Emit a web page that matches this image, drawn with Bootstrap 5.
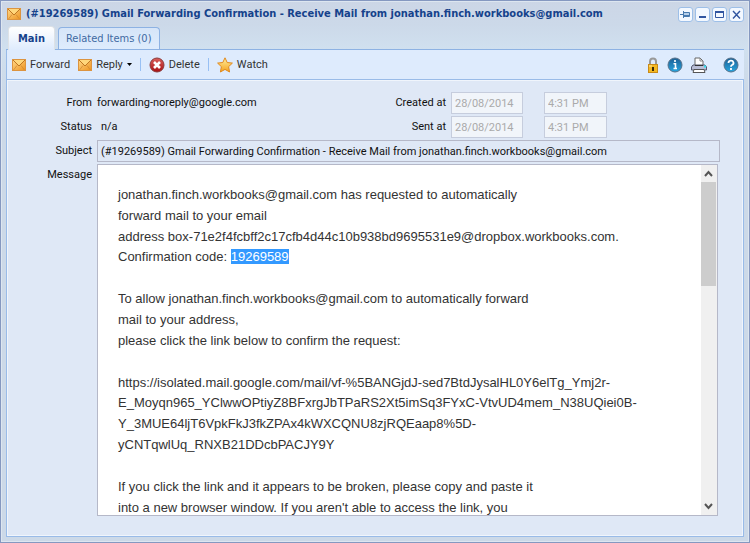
<!DOCTYPE html>
<html lang="en">
<head>
<meta charset="utf-8">
<meta name="viewport" content="width=device-width, initial-scale=1">
<title>Gmail Forwarding Confirmation</title>
<link href="https://cdn.jsdelivr.net/npm/bootstrap@5.3.0/dist/css/bootstrap.min.css" rel="stylesheet">
<style>
  body { font-family: Roboto, "Liberation Sans", sans-serif; font-size: 11px; line-height: 14px; color: #111; }
  .mail-window { border: 1px solid #8598c0; background: linear-gradient(#ccd6e6 0, #ccd9e9 24px, #d0e0ef 48px, #ccd9e8 90px); padding: 1px 5px 5px; box-shadow: inset 0 0 0 1px #dde6f0; }
  .title-row { height: 24px; padding-left: 1px; gap: 5px; }
  .title-row h1 { font-family: "DejaVu Sans Condensed", "DejaVu Sans", sans-serif; font-size: 11px; line-height: 14px; font-weight: 700; color: #15428b; white-space: nowrap; }
  .win-btns { gap: 2px; }
  .win-btn { width: 15px; height: 15px; border: 1px solid #9dbfe8; border-radius: 3px; background: #f3f8ff; }
  .mail-tabs { height: 24px; padding-left: 2px; border-bottom: 1px solid #8db2e3; --bs-nav-tabs-border-width: 0; gap: 3px; font-family: "DejaVu Sans Condensed", "DejaVu Sans", sans-serif; }
  .mail-tabs .nav-link { height: 22px; padding: 4px 7px; border: 1px solid #8db2e3; border-bottom: 0; border-radius: 4px 4px 0 0; color: #416aa3; background: linear-gradient(#d6e5f8, #deecfd); margin: 0; }
  .mail-tabs .nav-link.active { height: 24px; padding: 5px 9px; margin-bottom: -1px; color: #15428b; font-weight: 700; background: linear-gradient(#fff, #deebfd); }
  .tool-row { height: 30px; background: #deebfd; border: solid #99bbe8; border-width: 0 0 1px 1px; padding: 0 5px; }
  .tool-btn { border: 0; background: none; padding: 0; color: #333; font-family: Roboto, "Liberation Sans", sans-serif; font-size: 11px; line-height: 16px; }
  .tool-sep { width: 1px; height: 13px; background: #98c0f4; }
  .form-body { background: #dfe8f6; border: 1px solid #99bbe8; border-top: 0; box-shadow: inset 0 0 0 1px #f0f5fc; padding: 12px 23px 20px 6px; min-height: 0; }
  .field-label { width: 80px; padding-right: 1px; text-align: right; flex: none; }
  .field-rows { display: grid; gap: 10px; padding-top: 4px; }
  .box-input { height: 22px; border: 1px solid #b5b8c8; border-radius: 0; padding: 0 3px; font-size: 11px; line-height: 14px; min-width: 0; }
  .box-input:disabled { color: #aaa; background: #f1f5fa; border-color: #c6cddd; }
  .date-input { width: 72px; margin: 0 21px 0 1px; }
  .time-input { width: 63px; }
  .dates { display: grid; gap: 2px; margin-right: 113px; }
  .subject-row { padding: 2px 0; }
  .subject-input, .subject-input:focus { background: #dfe8f6; color: #111; outline: 0; }
  .message-box { border: 1px solid #b5b8c8; background: #fff; margin-right: 2px; min-height: 0; }
  .message-text { font-family: "Liberation Sans", Arial, sans-serif; font-size: 13px; line-height: 1.6; color: #333; padding: 20px; white-space: nowrap; overflow: hidden; }
  .message-text p { margin-bottom: 21px; }
  .picked { background: #39f; color: #fff; }
  .scroll-track { width: 16px; background: #f0f0f0; flex: none; }
  .scroll-track button { height: 17px; border: 0; padding: 0; background: none; }
  .scroll-thumb { height: 33%; width: 15px; background: #cdcdcd; }
  svg { display: block; flex: none; }
</style>
</head>
<body>
<svg width="0" height="0" class="position-absolute" aria-hidden="true">
  <defs>
    <linearGradient id="gold" x1="0" y1="0" x2="0" y2="1"><stop offset="0" stop-color="#fff0a0"/><stop offset="1" stop-color="#f5a21c"/></linearGradient>
    <linearGradient id="amber" x1="0" y1="0" x2="1" y2="1"><stop offset="0" stop-color="#ffd98a"/><stop offset="1" stop-color="#ee9420"/></linearGradient>
    <linearGradient id="blue" x1="0" y1="0" x2="0" y2="1"><stop offset="0" stop-color="#1d5f94"/><stop offset="1" stop-color="#27a6e0"/></linearGradient>
    <linearGradient id="red" x1="0" y1="0" x2="0" y2="1"><stop offset="0" stop-color="#d9605c"/><stop offset="1" stop-color="#a80f12"/></linearGradient>
    <symbol id="envelope" viewBox="0 0 14 12"><rect x=".5" y=".5" width="13" height="11" fill="url(#amber)" stroke="#dc9440"/><path d="M1.500 1h11L7 6.500z" fill="#ffd77c"/><path d="M1 1l6 6 6-6" fill="none" stroke="#bf7622"/><path d="M1.500 11L5 6.500M12.500 11L9 6.500" fill="none" stroke="#d08a34" stroke-width=".8"/></symbol>
  </defs>
</svg>
<main class="mail-window vh-100 d-flex flex-column">
  <header class="title-row flex-shrink-0 d-flex align-items-center">
    <svg width="14" height="12"><use href="#envelope"/></svg>
    <h1 class="mb-0 flex-grow-1">(#19269589) Gmail Forwarding Confirmation - Receive Mail from jonathan.finch.workbooks@gmail.com</h1>
    <div class="win-btns d-flex">
      <button class="win-btn p-0" aria-label="Pin"><svg width="13" height="13"><path d="M1 6.500h3M4.500 3v7" fill="none" stroke="#4879ae"/><path d="M5 4.500h5.500v4H5" fill="#b8d0ea" stroke="#4879ae"/><path d="M5 7.500h6" stroke="#4879ae"/></svg></button>
      <button class="win-btn p-0" aria-label="Minimize"><svg width="13" height="13"><path d="M3 9h7" stroke="#3155a0" stroke-width="2"/></svg></button>
      <button class="win-btn p-0" aria-label="Maximize"><svg width="13" height="13"><path d="M2.500 3v6.500h8V3" fill="none" stroke="#3155a0"/><path d="M2 4h9" stroke="#3155a0" stroke-width="2"/></svg></button>
      <button class="win-btn p-0" aria-label="Close"><svg width="13" height="13"><path d="M3 3l7 7.500M10 3l-7 7.500" stroke="#3155a0" stroke-width="1.400"/></svg></button>
    </div>
  </header>
  <nav class="mail-tabs nav nav-tabs flex-shrink-0 align-items-end flex-nowrap">
    <a class="nav-link active" href="#main" aria-current="page">Main</a>
    <a class="nav-link" href="#related">Related Items (0)</a>
  </nav>
  <div class="tool-row flex-shrink-0 d-flex align-items-center justify-content-between" role="toolbar" aria-label="Mail actions">
    <div class="d-flex align-items-center gap-2">
      <button class="tool-btn d-flex align-items-center gap-1"><svg width="14" height="12"><use href="#envelope"/></svg>Forward</button>
      <button class="tool-btn d-flex align-items-center gap-1"><svg width="14" height="12"><use href="#envelope"/></svg>Reply<svg width="5" height="3"><path d="M0 0h5L2.500 3z"/></svg></button>
      <span class="tool-sep"></span>
      <button class="tool-btn d-flex align-items-center gap-1"><svg width="16" height="16"><circle cx="8" cy="8" r="7" fill="url(#red)" stroke="#8b3a3a"/><path d="M5 5l6 6M11 5l-6 6" stroke="#fff" stroke-width="2.600"/></svg>Delete</button>
      <span class="tool-sep"></span>
      <button class="tool-btn d-flex align-items-center gap-1"><svg width="16" height="16"><path d="M8 .8l2.200 4.700 5.200.6-3.800 3.600 1 5.300L8 12.400 3.400 15l1-5.300L.6 6.100l5.200-.6z" fill="url(#gold)" stroke="#e08a20"/></svg>Watch</button>
    </div>
    <div class="d-flex align-items-center">
      <button class="tool-btn me-2" aria-label="Lock"><svg width="12" height="16"><path d="M3 8V4.500a3 3 0 0 1 6 0V8" fill="none" stroke="#999" stroke-width="2"/><rect x="1.500" y="7.500" width="9" height="8" fill="#f4b922" stroke="#c98a18"/><path d="M2 9h3" stroke="#ffe79a"/><path d="M6 10v4" stroke="#3a2a08" stroke-width="2"/></svg></button>
      <button class="tool-btn me-2" aria-label="Information"><svg width="16" height="16"><circle cx="8" cy="8" r="7" fill="url(#blue)" stroke="#56718a"/><path d="M8 3v2M6.500 6.800h2V11M6.500 11.500h3.500" fill="none" stroke="#fff" stroke-width="1.600"/></svg></button>
      <button class="tool-btn me-3" aria-label="Print"><svg width="16" height="16"><path d="M4 8V1h5l3 3v5" fill="#fff" stroke="#666"/><path d="M9 1v3h3" fill="none" stroke="#888"/><path d="M2 8h12l1.500 2v3H.5v-3z" fill="#b9bed6" stroke="#55586e"/><path d="M4 8.500h8" stroke="#333"/><path d="M3 12.500h10l1 3H2z" fill="#fff" stroke="#555"/><path d="M13 9.500h2" stroke="#2be0f0" stroke-width="2"/></svg></button>
      <button class="tool-btn" aria-label="Help"><svg width="16" height="16"><circle cx="8" cy="8" r="7" fill="url(#blue)" stroke="#56718a"/><path d="M5.500 6a2.500 2.300 0 1 1 3.500 2c-.8.400-1 .8-1 1.800M8 11v2" fill="none" stroke="#fff" stroke-width="1.800"/></svg></button>
    </div>
  </div>
  <form class="form-body flex-grow-1 d-flex flex-column">
    <div class="d-flex flex-shrink-0 justify-content-between align-items-start">
      <dl class="field-rows mb-0">
        <div class="d-flex"><dt class="field-label fw-normal">From</dt><dd class="ms-1 mb-0">forwarding-noreply@google.com</dd></div>
        <div class="d-flex"><dt class="field-label fw-normal">Status</dt><dd class="ms-2 mb-0">n/a</dd></div>
      </dl>
      <div class="dates">
        <div class="d-flex align-items-center justify-content-end"><label class="me-1" for="createdDate">Created at</label><input id="createdDate" class="box-input date-input" value="28/08/2014" disabled><input aria-label="Created time" class="box-input time-input" value="4:31 PM" disabled></div>
        <div class="d-flex align-items-center justify-content-end"><label class="me-1" for="sentDate">Sent at</label><input id="sentDate" class="box-input date-input" value="28/08/2014" disabled><input aria-label="Sent time" class="box-input time-input" value="4:31 PM" disabled></div>
      </div>
    </div>
    <div class="subject-row d-flex flex-shrink-0 align-items-center"><label class="field-label me-1" for="subject">Subject</label><input id="subject" class="box-input subject-input flex-grow-1" readonly value="(#19269589) Gmail Forwarding Confirmation - Receive Mail from jonathan.finch.workbooks@gmail.com"></div>
    <div class="d-flex flex-grow-1 overflow-hidden">
      <span class="field-label me-1 pt-1" id="messageLabel">Message</span>
      <div class="message-box flex-grow-1 d-flex" role="region" aria-labelledby="messageLabel">
        <div class="message-text flex-grow-1">
          <p>jonathan.finch.workbooks@gmail.com has requested to automatically<br>forward mail to your email<br>address box-71e2f4fcbff2c17cfb4d44c10b938bd9695531e9@dropbox.workbooks.com.<br>Confirmation code: <span class="picked">19269589</span></p>
          <p>To allow jonathan.finch.workbooks@gmail.com to automatically forward<br>mail to your address,<br>please click the link below to confirm the request:</p>
          <p>https://isolated.mail.google.com/mail/vf-%5BANGjdJ-sed7BtdJysalHL0Y6elTg_Ymj2r-<br>E_Moyqn965_YClwwOPtiyZ8BFxrgJbTPaRS2Xt5imSq3FYxC-VtvUD4mem_N38UQiei0B-<br>Y_3MUE64ljT6VpkFkJ3fkZPAx4kWXCQNU8zjRQEaap8%5D-<br>yCNTqwlUq_RNXB21DDcbPACJY9Y</p>
          <p>If you click the link and it appears to be broken, please copy and paste it<br>into a new browser window. If you aren't able to access the link, you</p>
        </div>
        <div class="scroll-track d-flex flex-column">
          <button type="button" aria-label="Scroll up"><svg width="15" height="17"><path d="M4 11l3.500-4 3.500 4" fill="none" stroke="#555" stroke-width="2"/></svg></button>
          <div class="flex-grow-1"><div class="scroll-thumb"></div></div>
          <button type="button" aria-label="Scroll down"><svg width="15" height="17"><path d="M4 6l3.500 4L11 6" fill="none" stroke="#555" stroke-width="2"/></svg></button>
        </div>
      </div>
    </div>
  </form>
</main>
<script src="https://cdn.jsdelivr.net/npm/bootstrap@5.3.0/dist/js/bootstrap.bundle.min.js"></script>
</body>
</html>
